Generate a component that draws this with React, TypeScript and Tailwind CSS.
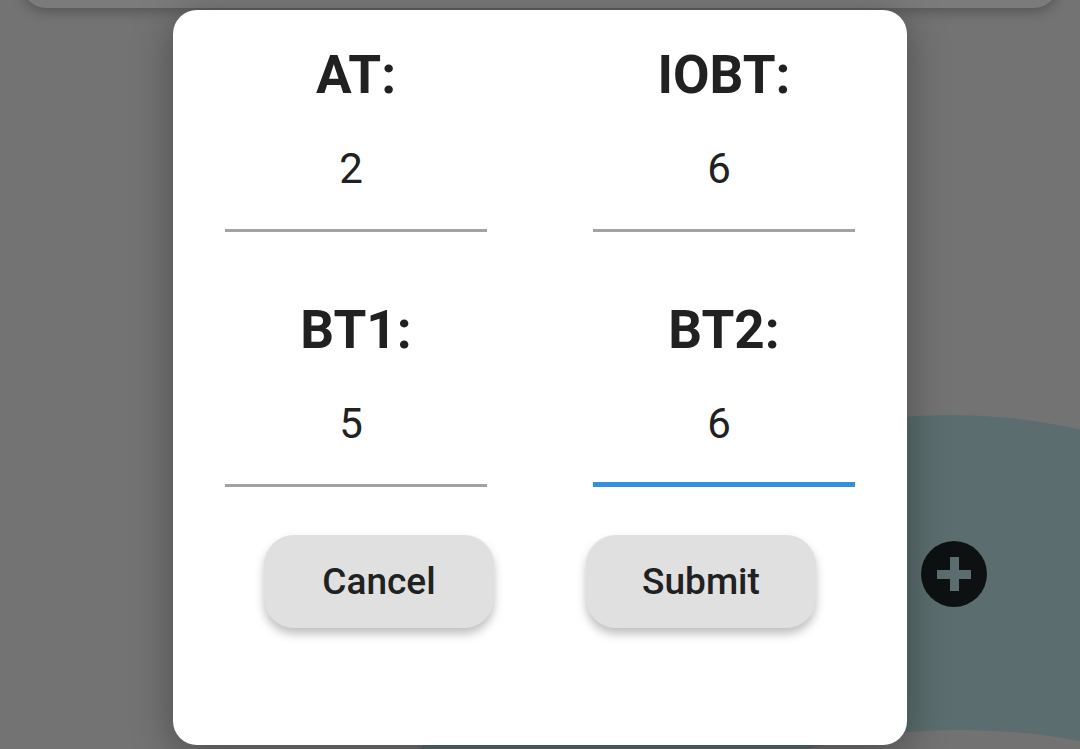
import React from 'react';

const fields = [
  { label: 'AT:', value: '2', focused: false },
  { label: 'IOBT:', value: '6', focused: false },
  { label: 'BT1:', value: '5', focused: false },
  { label: 'BT2:', value: '6', focused: true },
];

function Field({ label, value, focused }: { label: string; value: string; focused: boolean }) {
  return (
    <div className="flex flex-col items-center">
      <p className="text-[53px] leading-none font-bold text-[#212121]">{label}</p>
      <p className="mt-[46px] pr-[10px] text-[42px] leading-none text-[#212121]">{value}</p>
      {focused ? (
        <div className="mt-[37px] w-full h-[5px] bg-[#3490dc]" />
      ) : (
        <div className="mt-[39px] w-full h-[3px] bg-[#a3a3a3]" />
      )}
    </div>
  );
}

export default function App() {
  return (
    <div
      className="relative w-[1080px] h-[749px] overflow-hidden bg-[#737373]"
      style={{ fontFamily: 'Roboto, "Noto Sans", sans-serif' }}
    >
      {/* background page under the scrim */}
      <div className="absolute left-[22px] right-[22px] -top-[40px] h-[48px] rounded-[30px] bg-[#7b7b7b] shadow-[0_4px_12px_rgba(0,0,0,0.25)]" />
      <div className="absolute left-[363px] top-[415px] w-[1174px] h-[1174px] rounded-full bg-[#5b6d6e]" />
      <div className="absolute left-[700px] top-[730px] w-[520px] h-[200px] rounded-[50%] bg-[#727272]" />
      <div className="absolute left-[921px] top-[541px] w-[66px] h-[66px] rounded-full bg-[#0d1112] flex items-center justify-center">
        <div className="relative w-[34px] h-[34px]">
          <div className="absolute left-0 right-0 top-[12.5px] h-[9px] bg-[#5b6d6e]" />
          <div className="absolute top-0 bottom-0 left-[12.5px] w-[9px] bg-[#5b6d6e]" />
        </div>
      </div>

      {/* dialog */}
      <div className="relative flex justify-center pt-[10px]">
        <div className="w-[734px] h-[735px] rounded-[24px] bg-white px-[52px] pt-[39px] shadow-[0_8px_40px_rgba(0,0,0,0.35)]">
          <div className="grid grid-cols-2 gap-x-[106px] gap-y-[72px]">
            {fields.map((f) => (
              <Field key={f.label} {...f} />
            ))}
          </div>
          <div className="mt-[48px] flex justify-center gap-[92px]">
            <button className="w-[230px] h-[93px] rounded-[30px] bg-[#e0e0e0] text-[37px] font-medium text-[#212121] shadow-[0_6px_10px_rgba(0,0,0,0.25)]">
              Cancel
            </button>
            <button className="w-[230px] h-[93px] rounded-[30px] bg-[#e0e0e0] text-[37px] font-medium text-[#212121] shadow-[0_6px_10px_rgba(0,0,0,0.25)]">
              Submit
            </button>
          </div>
        </div>
      </div>
    </div>
  );
}
